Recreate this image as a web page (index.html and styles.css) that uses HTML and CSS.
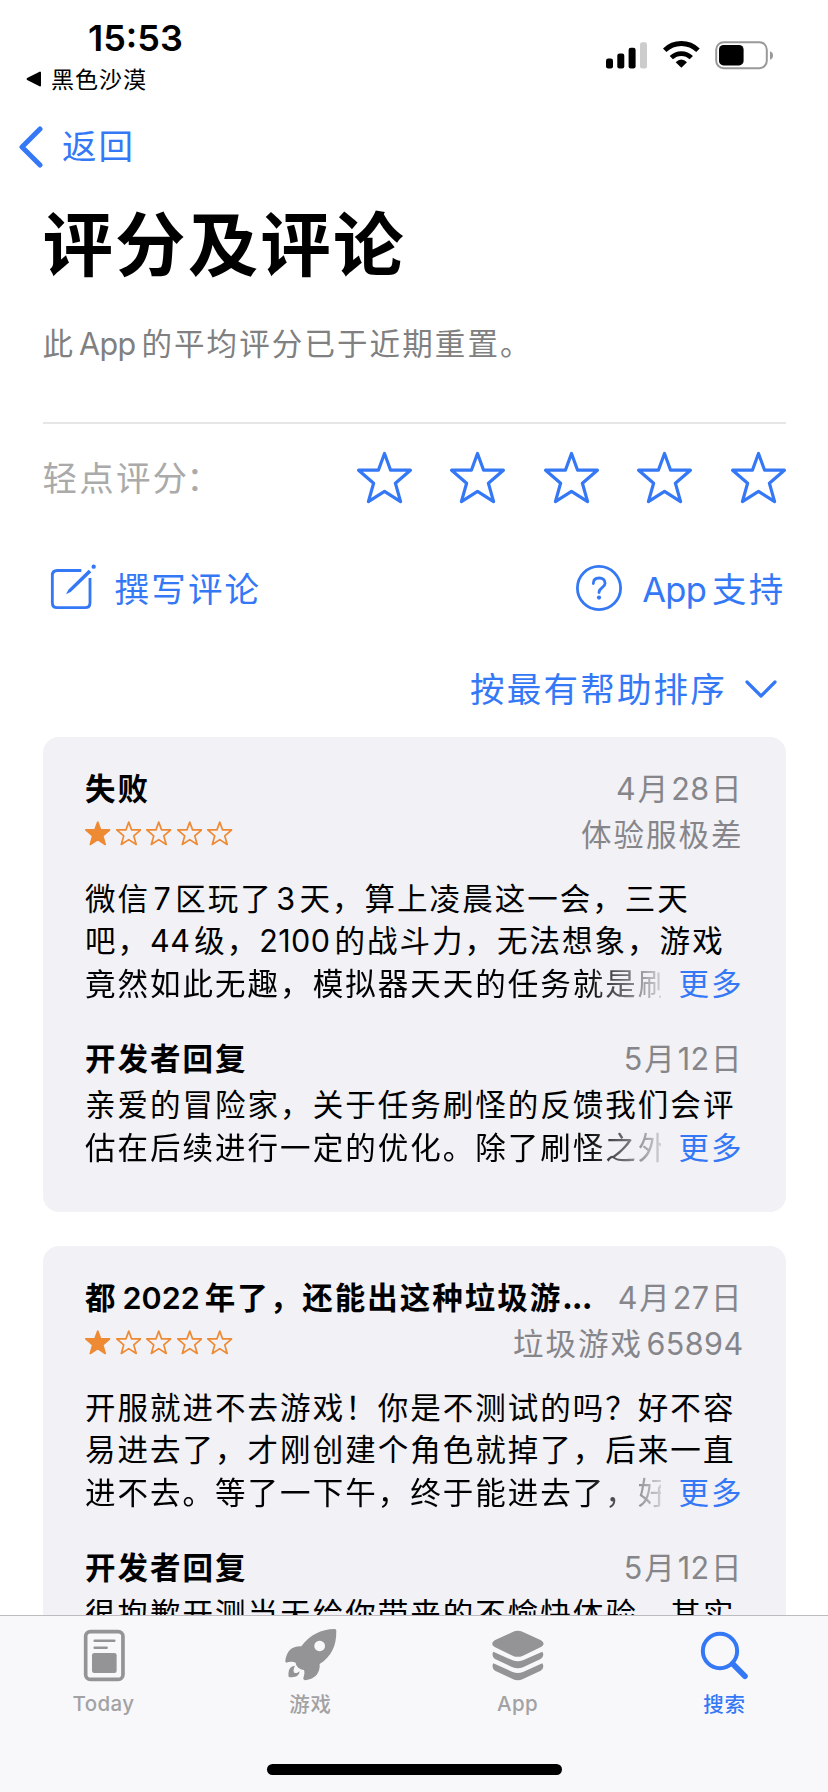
FILE: index.html
```html
<!DOCTYPE html>
<html lang="zh-CN">
<head>
<meta charset="utf-8">
<title>评分及评论</title>
<link rel="stylesheet" href="styles.css">
</head>
<body>
<svg class="defs" aria-hidden="true">
  <symbol id="star" viewBox="0 0 55 54"><path d="M27.5 2.5 33.6 19.2H53.4L38.4 32.3 43.6 50.6 27.5 40.3 11.4 50.6 16.6 32.3 1.6 19.2H21.4Z" stroke="currentColor" stroke-linejoin="round"/></symbol>
</svg>
<div class="screen">
  <header class="status">
    <div class="status-left">
      <div class="time">15:53</div>
      <div class="crumb"><svg class="crumb-arrow" viewBox="0 0 16 16"><path d="M14 1.6v12.8L1.6 8z" fill="#000" stroke="#000" stroke-width="2" stroke-linejoin="round"/></svg><span>黑色沙漠</span></div>
    </div>
    <div class="status-right">
      <svg class="signal" viewBox="0 0 42 28"><rect x="0" y="16.5" width="7" height="10" rx="2.2"/><rect x="11.3" y="11.5" width="7" height="15" rx="2.2"/><rect x="22.6" y="5.7" width="7" height="20.8" rx="2.2"/><rect x="34" y="0.3" width="7" height="26.2" rx="2.2" fill="#ccc"/></svg>
      <svg class="wifi" viewBox="744 124 111 82"><path d="M749 153A72 72 0 0 1 849 153" fill="none" stroke="#000" stroke-width="15" transform="translate(0 -1)"/><path d="M769 175A43 43 0 0 1 829 175" fill="none" stroke="#000" stroke-width="14" transform="translate(0 -1)"/><path d="M799 204 782 188Q799 171 816 188Z"/></svg>
      <svg class="battery" viewBox="0 0 60 29"><rect x="1.2" y="1.2" width="50.6" height="26" rx="7.5" fill="none" stroke="#999" stroke-width="2"/><rect x="4" y="4" width="24.6" height="20.4" rx="4.5"/><path d="M55 10.3q3 1 3 4.2t-3 4.2z" fill="#999"/></svg>
    </div>
  </header>

  <nav class="nav"><svg class="back" viewBox="0 0 24 42"><path d="M21 3 3 21 21 39" fill="none" stroke="currentColor" stroke-width="5" stroke-linecap="round" stroke-linejoin="round"/></svg><span>返回</span></nav>

  <main class="page">
    <h1 class="title">评分及评论</h1>
    <p class="subtitle">此<span class="lat word">App</span>的平均评分已于近期重置。</p>
    <hr class="rule">
    <section class="rate">
      <span class="rate-label">轻点评分<span class="colon">：</span></span>
      <div class="rate-stars"><svg><use href="#star"/></svg><svg><use href="#star"/></svg><svg><use href="#star"/></svg><svg><use href="#star"/></svg><svg><use href="#star"/></svg></div>
    </section>
    <section class="actions">
      <a class="action"><svg class="compose" viewBox="150 788 141 141"><path d="M244 810.500H172Q157 810.500 157 825.500V907Q157 922 172 922H255Q270 922 270 907V833" fill="none" stroke="currentColor" stroke-width="8.500"/><path d="M266 808 274 816 212 875 198 882 205 868Z" fill="currentColor"/><circle cx="281" cy="799" r="6.500" fill="currentColor"/></svg><span>撰写评论</span></a>
      <a class="action support"><svg class="help" viewBox="0 0 46 46"><circle cx="23" cy="23" r="21.600" fill="none" stroke="currentColor" stroke-width="2.800"/><path d="M17.300 18.500C17.300 15 19.700 13 23.200 13 26.700 13 29.100 15 29.100 18.200 29.100 22.800 23 22.500 23 27.500" fill="none" stroke="currentColor" stroke-width="2.800" stroke-linecap="round"/><circle cx="23" cy="32.600" r="2.100" fill="currentColor"/></svg><span><span class="lat word first">App</span>支持</span></a>
    </section>
    <div class="sort"><span>按最有帮助排序</span><svg class="down" viewBox="0 0 32 18"><path d="M2 2 16 16 30 2" fill="none" stroke="currentColor" stroke-width="3.200" stroke-linecap="round" stroke-linejoin="round"/></svg></div>

    <article class="card">
      <div class="row head"><h2 class="name">失败</h2><span class="meta date"><span class="lat">4</span>月<span class="lat">28</span>日</span></div>
      <div class="row sub"><div class="stars"><svg class="on"><use href="#star"/></svg><svg><use href="#star"/></svg><svg><use href="#star"/></svg><svg><use href="#star"/></svg><svg><use href="#star"/></svg></div><span class="meta">体验服极差</span></div>
      <div class="text">
        <div class="line">微信<span class="lat">7</span>区玩了<span class="lat">3</span>天，算上凌晨这一会，三天</div>
        <div class="line">吧，<span class="lat first">44</span>级，<span class="lat first">2100</span>的战斗力，无法想象，游戏</div>
        <div class="line last"><span class="fade">竟然如此无趣，模拟器天天的任务就是刷</span><a class="more">更多</a></div>
      </div>
      <div class="row reply"><h3 class="name">开发者回复</h3><span class="meta date"><span class="lat">5</span>月<span class="lat">12</span>日</span></div>
      <div class="text answer">
        <div class="line">亲爱的冒险家，关于任务刷怪的反馈我们会评</div>
        <div class="line last"><span class="fade">估在后续进行一定的优化。除了刷怪之外</span><a class="more">更多</a></div>
      </div>
    </article>

    <article class="card">
      <div class="row head"><h2 class="name">都<span class="lat">2022</span>年了，还能出这种垃圾游<span class="dots">...</span></h2><span class="meta date"><span class="lat">4</span>月<span class="lat">27</span>日</span></div>
      <div class="row sub"><div class="stars"><svg class="on"><use href="#star"/></svg><svg><use href="#star"/></svg><svg><use href="#star"/></svg><svg><use href="#star"/></svg><svg><use href="#star"/></svg></div><span class="meta">垃圾游戏<span class="lat end">65894</span></span></div>
      <div class="text">
        <div class="line">开服就进不去游戏！你是不测试的吗？好不容</div>
        <div class="line">易进去了，才刚创建个角色就掉了，后来一直</div>
        <div class="line last"><span class="fade">进不去。等了一下午，终于能进去了，好</span><a class="more">更多</a></div>
      </div>
      <div class="row reply"><h3 class="name">开发者回复</h3><span class="meta date"><span class="lat">5</span>月<span class="lat">12</span>日</span></div>
      <div class="text answer">
        <div class="line">很抱歉开测当天给你带来的不愉快体验，其实</div>
      </div>
    </article>
  </main>

  <footer class="tabbar">
    <div class="tabs">
      <a class="tab"><svg viewBox="228 84 160 165"><rect x="254" y="95" width="112" height="143" rx="14" fill="none" stroke="currentColor" stroke-width="11"/><path d="M281 122.500H340M281 143H317" stroke="currentColor" stroke-width="7.500" stroke-linecap="round"/><rect x="273" y="159" width="74" height="60" rx="7" fill="currentColor"/></svg><span class="tab-label en">Today</span></a>
      <a class="tab"><svg viewBox="851 84 160 165"><path fill="currentColor" fill-rule="evenodd" d="M1003 87Q1008 87 1008 92C1009 137 993 170 958 192C960 218 946 237 914 241Q908 240 909 234C913 222 913 216 911 210C898 209 887 199 886 188C875 183 866 187 858 188Q854 187 855 181C860 152 874 138 903 139C929 104 962 88 1003 87ZM958 122a16 16 0 1 0 .1 0Z"/><path fill="currentColor" d="M884 197C868 199 863 210 865 231C884 234 896 229 898 214C893 218 889 220 884 219C879 217 878 209 884 197Z"/></svg><span class="tab-label">游戏</span></a>
      <a class="tab"><svg viewBox="230 84 160 165"><g fill="currentColor"><path d="M295 96Q310 89 326 96L380 121Q396 131 380 141L326 167Q310 174 295 167L241 141Q226 131 241 121Z"/><path d="M237 155 295 181Q310 187 326 181L384 155Q392 168 379 177L326 202Q310 208 295 202L242 177Q230 168 237 155Z"/><path d="M237 190 295 216Q310 222 326 216L384 190Q392 203 379 212L326 237Q310 244 295 237L242 212Q230 203 237 190Z"/></g></svg><span class="tab-label en">App</span></a>
      <a class="tab active"><svg viewBox="851 84 160 165"><circle cx="917" cy="153" r="51.500" fill="none" stroke="currentColor" stroke-width="12"/><path d="M955 191 992 229" stroke="currentColor" stroke-width="17" stroke-linecap="round"/></svg><span class="tab-label">搜索</span></a>
    </div>
    <div class="home"></div>
  </footer>
</div>
</body>
</html>
```
FILE: styles.css
```css
* { box-sizing: border-box; }

body {
  margin: 0;
  background: #fff;
  color: #000;
  font-family: "Noto Sans CJK SC", sans-serif;
}

h1, h2, h3, p { margin: 0; font-weight: 700; }
p { font-weight: 400; }

.defs { position: absolute; width: 0; height: 0; }

.screen {
  display: flex;
  flex-direction: column;
  width: 828px;
  height: 1792px;
  overflow: hidden;
  white-space: nowrap;
}

.lat {
  font-family: Inter, sans-serif;
  line-height: 0;
  letter-spacing: 0.4px;
  margin: 0 4px 0 3.5px;
}
.lat.word { letter-spacing: -0.7px; margin: 0 6px 0 4px; }
.lat.first { margin-left: 0; }
.lat.end { margin-right: 0; }
.date .lat { margin: 0 1.5px 0 1px; }
.name .lat { letter-spacing: 0; margin: 0 5px; font-weight: 600; }
.dots { letter-spacing: 0; }

/* status bar */
.status {
  flex: none;
  display: flex;
  justify-content: space-between;
  height: 96px;
  padding: 17px 54px 0 26px;
}
.time {
  height: 43px;
  padding-left: 62px;
  font: 600 36px/43px Inter, sans-serif;
}
.crumb {
  display: flex;
  align-items: center;
  gap: 9px;
  height: 36px;
  font-size: 23px;
  line-height: 36px;
  letter-spacing: 1px;
}
.crumb-arrow { width: 16px; height: 16px; margin-top: 2px; }
.status-right {
  display: flex;
  align-items: flex-start;
  padding-top: 24px;
}
.signal { width: 42px; height: 28px; margin: 1px 15px 0 0; }
.wifi { width: 37px; height: 27.3px; margin: 0 15px 0 0; }
.battery { width: 60px; height: 29px; margin: -0.5px -1px 0 0; }

/* navigation */
.nav {
  flex: none;
  display: flex;
  align-items: center;
  gap: 19px;
  height: 50px;
  margin-top: 24px;
  padding-left: 19px;
  color: #3478f6;
  font-size: 34.5px;
  line-height: 48px;
  letter-spacing: 2px;
}
.nav span { margin-top: -2px; }
.back { width: 24px; height: 42px; margin-top: 3px; }

/* page */
.page {
  flex: 1;
  min-height: 0;
  overflow: hidden;
  padding: 20px 42.5px 0;
}
.title {
  height: 100px;
  font-size: 70.5px;
  line-height: 100px;
  letter-spacing: 2.1px;
}
.subtitle {
  height: 44px;
  margin-top: 31px;
  color: #808080;
  font-size: 30.5px;
  line-height: 43px;
  letter-spacing: 2.1px;
}
.rule {
  height: 2px;
  margin: 57px 0 0;
  border: 0;
  background: #e6e6e6;
}
.rate {
  display: flex;
  align-items: center;
  justify-content: space-between;
  height: 54px;
  margin-top: 26px;
}
.rate-label {
  margin-top: -3px;
  color: #aaa;
  font-size: 34.5px;
  line-height: 54px;
  letter-spacing: 2.2px;
}
.colon { margin-left: -3px; }
.rate-stars { display: flex; gap: 38.4px; color: #3478f6; }
.rate-stars svg { width: 55px; height: 54px; fill: none; stroke-width: 3.2; margin-top: 2px; }

.actions {
  display: flex;
  align-items: center;
  justify-content: space-between;
  height: 50px;
  margin-top: 59px;
}
.action {
  display: flex;
  align-items: center;
  color: #3478f6;
  font-size: 34.5px;
  line-height: 48px;
  letter-spacing: 2.2px;
}
.action > span { margin-top: -3px; }
.compose { width: 47px; height: 47px; margin: -4px 18px 0 7px; }
.help { width: 46px; height: 46px; margin-right: 20px; }

.sort {
  display: flex;
  align-items: center;
  justify-content: flex-end;
  gap: 18px;
  height: 44px;
  margin-top: 53px;
  padding-right: 8.5px;
  color: #3478f6;
  font-size: 34.5px;
  line-height: 44px;
  letter-spacing: 2.2px;
}
.sort span { margin-top: -2px; }
.down { width: 32px; height: 18px; margin-top: 2px; }

/* review cards */
.card {
  height: 475px;
  margin-top: 27px;
  padding: 28px 42px 0 42.5px;
  border-radius: 16px;
  background: #f1f1f6;
  font-size: 30.5px;
  letter-spacing: 2.02px;
}
.card + .card { margin-top: 34px; }
.row {
  display: flex;
  align-items: center;
  justify-content: space-between;
  height: 44px;
  line-height: 44px;
}
.name { font-size: 30.5px; }
.meta { color: #86868a; }
.sub { margin-top: 2px; }
.stars { display: flex; gap: 5px; color: #ee8a33; }
.stars svg { width: 25.5px; height: 25px; fill: none; stroke-width: 3.6; }
.stars .on { fill: currentColor; }
.text { margin-top: 20.5px; line-height: 42.5px; }
.line { height: 42.5px; }
.last { display: flex; justify-content: space-between; }
.fade {
  width: 576px;
  overflow: hidden;
  -webkit-mask-image: linear-gradient(to right, #000 500px, transparent 588px);
  mask-image: linear-gradient(to right, #000 500px, transparent 588px);
}
.more { color: #3478f6; }
.reply { margin-top: 32px; }
.answer { margin-top: 3px; }

/* tab bar */
.tabbar {
  flex: none;
  display: flex;
  flex-direction: column;
  align-items: center;
  justify-content: space-between;
  height: 177px;
  padding-bottom: 17px;
  border-top: 1px solid #bcbcc0;
  background: #f8f8fa;
}
.tabs { display: grid; grid-template-columns: repeat(4, 207px); }
.tab {
  display: flex;
  flex-direction: column;
  align-items: center;
  padding-top: 12px;
  color: #949496;
}
.tab svg { width: 53.3px; height: 55px; }
.tab-label {
  height: 36px;
  margin-top: 2px;
  font-size: 20.5px;
  font-weight: 500;
  line-height: 36px;
  letter-spacing: 0.8px;
  color: #a2a2a4;
}
.tab-label.en { margin-top: 3px; font-family: Inter, sans-serif; letter-spacing: 0.4px; }
.tab.active, .active .tab-label { color: #3478f6; }
.home { width: 295px; height: 11px; border-radius: 6px; background: #000; }
```
